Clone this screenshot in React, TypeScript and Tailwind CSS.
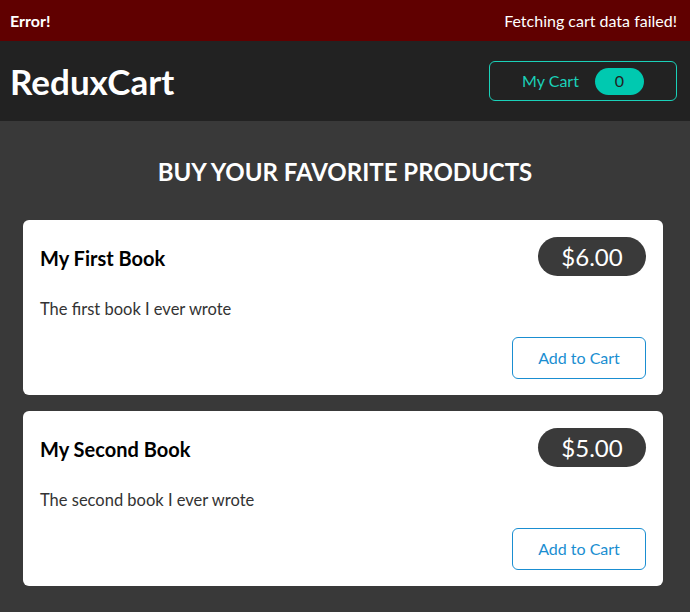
import React from 'react';

const products = [
  { id: 'p1', title: 'My First Book', price: 6, description: 'The first book I ever wrote' },
  { id: 'p2', title: 'My Second Book', price: 5, description: 'The second book I ever wrote' },
];

const ProductItem: React.FC<{ title: string; price: number; description: string }> = ({ title, price, description }) => (
  <li className="bg-white rounded-md px-[17px] pt-[17px] pb-4">
    <header className="flex items-center justify-between">
      <h3 className="text-[20px] font-bold text-black pt-[3px]">{title}</h3>
      <div className="bg-[#3a3a3a] text-white text-[24px] rounded-full h-[39px] w-[108px] flex items-center justify-center">
        ${price.toFixed(2)}
      </div>
    </header>
    <p className="text-[16.5px] text-[#333] mt-[21px] leading-6">{description}</p>
    <div className="flex justify-end mt-[16px]">
      <button className="border border-[#1a8ed1] text-[#1a8ed1] rounded-md h-[42px] w-[134px] text-[16px] bg-white">
        Add to Cart
      </button>
    </div>
  </li>
);

export default function App() {
  return (
    <div className="min-h-[612px] bg-[#393939]" style={{ fontFamily: 'Lato, "Noto Sans", sans-serif' }}>
      <section className="h-[41px] bg-[#600000] text-white flex items-center justify-between px-[10px] pr-[13px] text-[16px]">
        <h2 className="font-bold">Error!</h2>
        <p>Fetching cart data failed!</p>
      </section>
      <header className="h-[80px] bg-[#222222] flex items-center justify-between px-[10px] pr-[13px]">
        <h1 className="text-white text-[35px] font-bold">ReduxCart</h1>
        <button className="border border-[#1ad1b9] rounded-md h-[40px] w-[188px] flex items-center justify-center gap-[16px] text-[#1ad1b9] text-[16px]">
          <span>My Cart</span>
          <span className="bg-[#00c9b0] text-[#222] rounded-full w-[49px] h-[27px] flex items-center justify-center">0</span>
        </button>
      </header>
      <main className="px-[23px] pt-[33px] pb-6">
        <h2 className="text-white text-[24px] font-bold text-center uppercase">Buy your favorite products</h2>
        <ul className="mt-[30px] w-[640px] flex flex-col gap-4">
          {products.map((p) => (
            <ProductItem key={p.id} title={p.title} price={p.price} description={p.description} />
          ))}
        </ul>
      </main>
    </div>
  );
}
